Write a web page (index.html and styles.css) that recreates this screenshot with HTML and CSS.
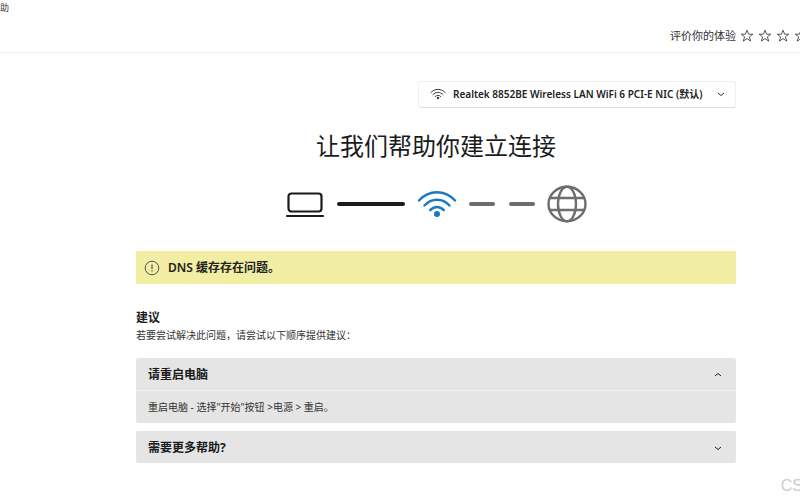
FILE: index.html
```
<!DOCTYPE html>
<html lang="zh-CN">
<head>
    <meta charset="UTF-8">
    <meta name="viewport" content="width=device-width, initial-scale=1.0">
    <title>让我们帮助你建立连接</title>
    <link rel="stylesheet" href="styles.css">
</head>
<body>

<svg class="symbols" aria-hidden="true">
    <symbol id="star" viewBox="0 0 14 14">
        <path d="M7 1.2l1.6 4h4.2L9.4 7.8l1.3 4.3L7 9.6l-3.7 2.5 1.3-4.3L1.2 5.2h4.2z" fill="none" stroke="currentColor" stroke-width="0.9" stroke-linejoin="round"/>
    </symbol>
    <symbol id="wifi" viewBox="0 0 40 28">
        <path d="M2 10.5C12-.5 28-.5 38 10.5M7.5 15.5c7-7.6 18-7.6 25 0M13.200 20.200c4-4.200 9.600-4.200 13.600 0" fill="none" stroke="currentColor" stroke-linecap="round"/>
        <circle cx="20" cy="24" r="3" fill="currentColor"/>
    </symbol>
    <symbol id="chevron" viewBox="0 0 8 8">
        <path d="M1 3l3 2.500L7 3" fill="none" stroke="currentColor"/>
    </symbol>
</svg>

<header class="header">
    <span class="window-title">助</span>
    <div class="rating">
        <span>评价你的体验</span>
        <button class="star" aria-label="1"><svg><use href="#star"/></svg></button>
        <button class="star" aria-label="2"><svg><use href="#star"/></svg></button>
        <button class="star" aria-label="3"><svg><use href="#star"/></svg></button>
        <button class="star" aria-label="4"><svg><use href="#star"/></svg></button>
    </div>
</header>

<main class="content">
    <div class="adapter">
        <label for="adapter" aria-label="网络适配器"><svg class="adapter-icon"><use href="#wifi"/></svg></label>
        <select id="adapter">
            <option>Realtek 8852BE Wireless LAN WiFi 6 PCI-E NIC (默认)</option>
        </select>
        <svg class="chevron"><use href="#chevron"/></svg>
    </div>

    <h1>让我们帮助你建立连接</h1>

    <div class="status">
        <svg class="laptop" viewBox="0 0 40 28">
            <rect x="3.500" y="3.500" width="33" height="18" rx="3" fill="none" stroke="currentColor" stroke-width="2.200"/>
            <path d="M2 26h36" stroke="currentColor" stroke-width="2.200" stroke-linecap="round"/>
        </svg>
        <span class="line"></span>
        <svg class="signal"><use href="#wifi"/></svg>
        <span class="dashes"><i></i><i></i></span>
        <svg class="globe" viewBox="0 0 40 38">
            <g fill="none" stroke="currentColor" stroke-width="2.400">
                <ellipse cx="20" cy="19" rx="18.500" ry="17.300"/>
                <ellipse cx="20" cy="19" rx="9" ry="17.300"/>
                <path d="M3 13h34M3 25h34"/>
            </g>
        </svg>
    </div>

    <div class="alert">
        <svg viewBox="0 0 16 16">
            <circle cx="8" cy="8" r="6.800" fill="none" stroke="currentColor"/>
            <path d="M8 4.500v4.500M8 10.300v1.300" stroke="currentColor" stroke-width="1.200"/>
        </svg>
        <span>DNS 缓存存在问题。</span>
    </div>

    <h2>建议</h2>
    <p class="hint">若要尝试解决此问题，请尝试以下顺序提供建议：</p>

    <details class="panel" open>
        <summary>请重启电脑<svg class="chevron up"><use href="#chevron"/></svg></summary>
        <p>重启电脑 - 选择"开始"按钮 &gt;电源 &gt; 重启。</p>
    </details>
    <details class="panel">
        <summary>需要更多帮助?<svg class="chevron"><use href="#chevron"/></svg></summary>
    </details>
</main>

<div class="watermark">CS</div>

</body>
</html>
```
FILE: styles.css
```
* {
    box-sizing: border-box;
}
body {
    margin: 0;
    min-height: 100vh;
    position: relative;
    overflow: hidden;
    font-family: "Noto Sans", "Noto Sans CJK SC", sans-serif;
    font-size: 10px;
    line-height: 16px;
    color: #333;
    background-color: #fff;
}
h1, h2, p {
    margin: 0;
}
.symbols {
    display: none;
}
.header {
    display: flex;
    justify-content: space-between;
    height: 53px;
    border-bottom: 1px solid #eee;
}
.window-title {
    font-size: 9px;
}
.rating {
    display: flex;
    align-items: center;
    gap: 4px;
    margin-right: -8px;
    padding-top: 20px;
    font-size: 11px;
}
.star {
    display: flex;
    padding: 0;
    border: none;
    background: none;
    color: #444;
    cursor: pointer;
}
.star svg {
    width: 14px;
    height: 14px;
}
.content {
    padding: 28px 64px 0 136px;
}
.adapter {
    display: flex;
    align-items: center;
    width: 318px;
    height: 27px;
    margin-left: auto;
    padding: 0 10px 2px 11px;
    border: 1px solid #f0f0f0;
    border-bottom-color: #ddd;
    border-radius: 3px;
}
.adapter label {
    display: flex;
}
.adapter-icon {
    width: 16px;
    height: 12px;
    stroke-width: 2.4;
}
.adapter select {
    flex: 1;
    min-width: 0;
    margin: 0 0 0 7px;
    padding: 0;
    border: none;
    appearance: none;
    background: none;
    font: 600 10px/16px "Noto Sans", "Noto Sans CJK SC", sans-serif;
    color: #222;
}
.chevron {
    flex: none;
    width: 8px;
    height: 8px;
}
.up {
    transform: rotate(180deg);
}
h1 {
    margin-top: 20px;
    font-size: 24px;
    line-height: 36px;
    font-weight: 400;
    text-align: center;
    color: #1b1b1b;
}
.status {
    display: flex;
    align-items: center;
    justify-content: center;
    gap: 12px;
    height: 40px;
    margin-top: 20px;
    color: #1b1b1b;
}
.laptop, .signal {
    width: 40px;
    height: 28px;
}
.line {
    width: 68px;
    height: 4px;
    border-radius: 2px;
    background-color: #1b1b1b;
}
.signal {
    color: #1979c3;
    stroke-width: 2.4;
}
.dashes {
    display: flex;
    gap: 14px;
}
.dashes i {
    width: 26px;
    height: 4px;
    border-radius: 2px;
    background-color: #6e6e6e;
}
.globe {
    width: 40px;
    height: 38px;
    color: #6e6e6e;
}
.alert {
    display: flex;
    align-items: center;
    gap: 8px;
    height: 33px;
    margin-top: 27px;
    padding: 0 8px;
    border-radius: 2px;
    background-color: #f1eda2;
    font-size: 12px;
    font-weight: 600;
    color: #222;
}
.alert svg {
    width: 16px;
    height: 16px;
    color: #555;
}
h2 {
    margin-top: 26px;
    font-size: 12px;
    line-height: 16px;
    color: #1b1b1b;
}
.hint {
    padding-top: 1px;
    margin-bottom: 15px;
}
.panel {
    margin-bottom: 8px;
    border-radius: 2px;
    background-color: #e5e5e5;
}
.panel summary {
    display: flex;
    align-items: center;
    justify-content: space-between;
    height: 32px;
    padding: 2px 14px 0 12px;
    font-size: 12px;
    font-weight: 700;
    color: #1b1b1b;
    cursor: pointer;
}
.panel p {
    padding: 8px 12px;
    border-top: 1px solid #f2f2f2;
}
.watermark {
    position: absolute;
    right: -3px;
    bottom: 4px;
    font: 16px/20px "Liberation Sans", Arial, sans-serif;
    color: #ccc;
}
```
